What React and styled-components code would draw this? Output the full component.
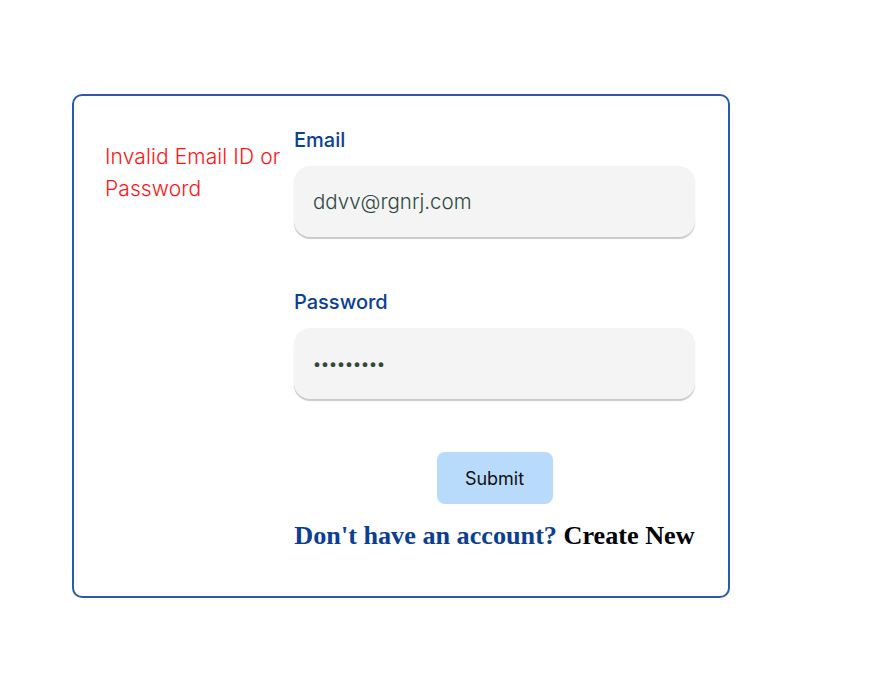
import React from 'react';
import styled, { createGlobalStyle } from 'styled-components';

const GlobalStyle = createGlobalStyle`
  body {
    margin: 0;
    background: #ffffff;
    font-family: 'Inter', 'Noto Sans', sans-serif;
  }
`;

const Page = styled.div`
  padding: 94px 0 0 72px;
`;

const Card = styled.div`
  width: 658px;
  height: 504px;
  box-sizing: border-box;
  border: 2px solid #2a5aad;
  border-radius: 10px;
  display: flex;
  padding: 32px 32px 0 31px;
`;

const ErrorText = styled.p`
  margin: 13px 0 0;
  width: 189px;
  color: #ff1414;
  font-size: 21px;
  line-height: 32px;
  font-weight: 300;
  letter-spacing: 0.1px;
`;

const Form = styled.form`
  width: 401px;
  display: flex;
  flex-direction: column;
`;

const Field = styled.div`
  display: flex;
  flex-direction: column;
  gap: 14px;
  margin-bottom: ${(p) => p.$gap || 0}px;
`;

const Label = styled.label`
  color: #0b3f94;
  font-size: 20px;
  line-height: 24px;
  font-weight: 500;
  height: 24px;
`;

const Input = styled.input`
  box-sizing: border-box;
  height: 71px;
  width: 100%;
  border: none;
  outline: none;
  border-radius: 16px;
  background: #f4f4f4;
  box-shadow: 0 2px 1px #c9c9c9;
  padding: 0 19px;
  font-family: 'Inter', 'Noto Sans', sans-serif;
  font-size: 20.5px;
  font-weight: 300;
  color: #2e4a3f;
  &[type='password'] {
    font-size: 15px;
    font-weight: 500;
    letter-spacing: 0;
  }
`;

const Submit = styled.button`
  align-self: center;
  width: 116px;
  height: 52px;
  border: none;
  border-radius: 8px;
  background: #b8dbfb;
  color: #111;
  font-family: 'Inter', 'Noto Sans', sans-serif;
  font-size: 18px;
  font-weight: 400;
  margin-top: 53px;
  margin-bottom: 16px;
`;

const Footer = styled.p`
  margin: 0;
  font-family: 'Liberation Serif', 'DejaVu Serif', serif;
  font-weight: 700;
  font-size: 26.2px;
  line-height: 32px;
  text-align: center;
  color: #0b3f94;
  white-space: nowrap;
`;

const Create = styled.span`
  color: #000;
`;

export default function App() {
  return (
    <>
      <GlobalStyle />
      <Page>
        <Card>
          <ErrorText>Invalid Email ID or Password</ErrorText>
          <Form onSubmit={(e) => e.preventDefault()}>
            <Field $gap={53}>
              <Label>Email</Label>
              <Input type="email" defaultValue="ddvv@rgnrj.com" />
            </Field>
            <Field>
              <Label>Password</Label>
              <Input type="password" defaultValue="123456789" />
            </Field>
            <Submit type="submit">Submit</Submit>
            <Footer>
              Don't have an account? <Create>Create New</Create>
            </Footer>
          </Form>
        </Card>
      </Page>
    </>
  );
}
